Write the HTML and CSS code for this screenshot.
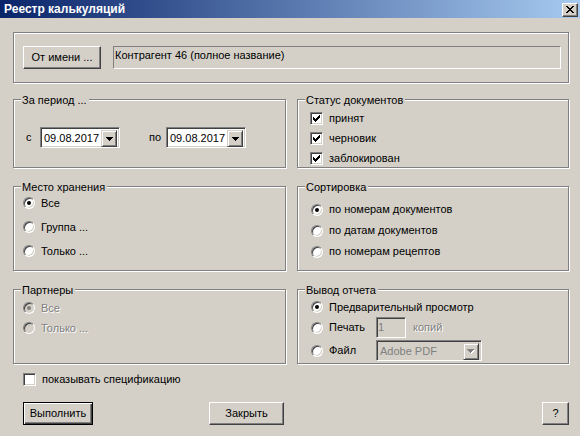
FILE: index.html
```html
<!DOCTYPE html>
<html lang="ru">
<head>
    <meta charset="UTF-8">
    <meta name="viewport" content="width=device-width, initial-scale=1.0">
    <title>Реестр калькуляций</title>
    <link rel="stylesheet" href="styles.css">
</head>
<body>
    <div class="dlg">
        <div class="caption">
            <span class="caption-title">Реестр калькуляций</span>
            <span class="caption-btn">
                <svg width="8" height="7" viewBox="0 0 8 7" shape-rendering="crispEdges"><path d="M0 0h2v1H0zM6 0h2v1H6zM1 1h2v1H1zM5 1h2v1H5zM2 2h4v1H2zM3 3h2v1H3zM2 4h4v1H2zM1 5h2v1H1zM5 5h2v1H5zM0 6h2v1H0zM6 6h2v1H6z" fill="#000"/></svg>
            </span>
        </div>

        <div class="client">
            <div class="frame agent">
                <button class="btn btn-agent">От имени ...</button>
                <div class="static">Контрагент 46 (полное название)</div>
            </div>

            <div class="groups">
                <!-- период -->
                <div class="frame period">
                    <span class="frame-title">За период ...</span>
                    <div class="period-row">
                        <span class="period-lbl">с</span>
                        <div class="combo date">
                            <span class="combo-text">09.08.2017</span>
                            <span class="combo-btn"><svg width="7" height="4" viewBox="0 0 7 4" shape-rendering="crispEdges"><path d="M0 0h7v1H0zM1 1h5v1H1zM2 2h3v1H2zM3 3h1v1H3z" fill="#000"/></svg></span>
                        </div>
                        <span class="period-lbl to">по</span>
                        <div class="combo date">
                            <span class="combo-text">09.08.2017</span>
                            <span class="combo-btn"><svg width="7" height="4" viewBox="0 0 7 4" shape-rendering="crispEdges"><path d="M0 0h7v1H0zM1 1h5v1H1zM2 2h3v1H2zM3 3h1v1H3z" fill="#000"/></svg></span>
                        </div>
                    </div>
                </div>

                <!-- статус -->
                <div class="frame status">
                    <span class="frame-title">Статус документов</span>
                    <div class="opt"><span class="chk"><svg width="7" height="7" viewBox="0 0 7 7" shape-rendering="crispEdges"><path d="M6 0h1v3H6zM5 1h1v3H5zM4 2h1v3H4zM0 2h1v3H0zM1 3h1v3H1zM3 3h1v3H3zM2 4h1v3H2z" fill="#000"/></svg></span>принят</div>
                    <div class="opt"><span class="chk"><svg width="7" height="7" viewBox="0 0 7 7" shape-rendering="crispEdges"><path d="M6 0h1v3H6zM5 1h1v3H5zM4 2h1v3H4zM0 2h1v3H0zM1 3h1v3H1zM3 3h1v3H3zM2 4h1v3H2z" fill="#000"/></svg></span>черновик</div>
                    <div class="opt"><span class="chk"><svg width="7" height="7" viewBox="0 0 7 7" shape-rendering="crispEdges"><path d="M6 0h1v3H6zM5 1h1v3H5zM4 2h1v3H4zM0 2h1v3H0zM1 3h1v3H1zM3 3h1v3H3zM2 4h1v3H2z" fill="#000"/></svg></span>заблокирован</div>
                </div>

                <!-- место хранения -->
                <div class="frame storage">
                    <span class="frame-title">Место хранения</span>
                    <div class="opt"><span class="radio on"></span>Все</div>
                    <div class="opt"><span class="radio"></span>Группа ...</div>
                    <div class="opt"><span class="radio"></span>Только ...</div>
                </div>

                <!-- сортировка -->
                <div class="frame sorting">
                    <span class="frame-title">Сортировка</span>
                    <div class="opt"><span class="radio on"></span>по номерам документов</div>
                    <div class="opt"><span class="radio"></span>по датам документов</div>
                    <div class="opt"><span class="radio"></span>по номерам рецептов</div>
                </div>

                <!-- партнеры (недоступно) -->
                <div class="frame partners">
                    <span class="frame-title">Партнеры</span>
                    <div class="opt disabled"><span class="radio on"></span>Все</div>
                    <div class="opt disabled"><span class="radio"></span>Только ...</div>
                </div>

                <!-- вывод отчета -->
                <div class="frame output">
                    <span class="frame-title">Вывод отчета</span>
                    <div class="opt"><span class="radio on"></span>Предварительный просмотр</div>
                    <div class="opt out-print">
                        <span class="radio"></span><span class="out-lbl">Печать</span>
                        <div class="edit">1</div>
                        <span class="copies">копий</span>
                    </div>
                    <div class="opt out-file">
                        <span class="radio"></span><span class="out-lbl">Файл</span>
                        <div class="combo pdf">
                            <span class="combo-text">Adobe PDF</span>
                            <span class="combo-btn"><svg width="8" height="5" viewBox="0 0 8 5" shape-rendering="crispEdges"><path d="M1 1h7v1H1zM2 2h5v1H2zM3 3h3v1H3zM4 4h1v1H4z" fill="#fff"/><path d="M0 0h7v1H0zM1 1h5v1H1zM2 2h3v1H2zM3 3h1v1H3z" fill="#808080"/></svg></span>
                        </div>
                    </div>
                </div>
            </div>

            <div class="opt spec"><span class="chk"></span>показывать спецификацию</div>

            <div class="actions">
                <button class="btn btn-run">Выполнить</button>
                <button class="btn btn-close">Закрыть</button>
                <button class="btn btn-help">?</button>
            </div>
        </div>
    </div>
</body>
</html>
```

FILE: styles.css
```css
*{
    box-sizing: border-box;
}
body{
    margin: 0;
}
.dlg{
    width: 580px;
    height: 436px;
    background: #D4D0C8;
    font-family: "Liberation Sans", Arial, sans-serif;
    font-size: 11px;
    line-height: 13px;
    color: #000;
    overflow: hidden;
}

/* заголовок окна */
.caption{
    height: 18px;
    display: flex;
    align-items: center;
    padding: 0 2px 0 4px;
    background: linear-gradient(to right, #0A246A, #A6CAF0);
}
.caption-title{
    color: #fff;
    font-weight: bold;
    font-size: 12px;
}
.caption-btn{
    margin-left: auto;
    margin-top: 1px;
    width: 16px;
    height: 14px;
    display: flex;
    align-items: center;
    justify-content: center;
    background: #D4D0C8;
    border: 1px solid;
    border-color: #fff #404040 #404040 #fff;
    box-shadow: inset -1px -1px #808080;
}

.client{
    padding: 14px 11px 0 13px;
}

/* рамки групп */
.frame{
    position: relative;
    border: 1px solid #808080;
    box-shadow: 1px 1px 0 #fff, inset 1px 1px 0 #fff;
}
.frame-title{
    position: absolute;
    top: -6px;
    left: 7px;
    padding: 0 2px 0 1px;
    background: #D4D0C8;
    white-space: nowrap;
}

/* кнопки */
.btn{
    font: inherit;
    color: #000;
    height: 23px;
    padding: 0;
    background: #D4D0C8;
    border: 1px solid;
    border-color: #fff #404040 #404040 #fff;
    box-shadow: inset -1px -1px #808080;
}
.btn-agent{
    width: 78px;
}
.btn-run{
    width: 70px;
    border: 1px solid #000;
    box-shadow: inset 1px 1px #fff, inset -1px -1px #404040, inset -2px -2px #808080;
}
.btn-close{
    width: 75px;
    margin-left: 116px;
}
.btn-help{
    width: 27px;
    margin-left: auto;
}

.agent{
    height: 51px;
    display: flex;
    align-items: flex-start;
    padding: 13px 7px 0 9px;
}
.static{
    flex: 1;
    height: 23px;
    margin-left: 12px;
    padding: 2px 0 0 1px;
    border: 1px solid;
    border-color: #808080 #fff #fff #808080;
    white-space: nowrap;
}

.groups{
    display: grid;
    grid-template-columns: 273px 272px;
    grid-template-rows: 69px 85px 75px;
    column-gap: 11px;
    row-gap: 18px;
    margin-top: 16px;
}

/* флажки и переключатели */
.opt{
    display: flex;
    align-items: center;
    height: 20px;
    white-space: nowrap;
}
.chk{
    flex: none;
    width: 13px;
    height: 13px;
    margin-right: 6px;
    display: flex;
    align-items: center;
    justify-content: center;
    background: #fff;
    border: 1px solid;
    border-color: #808080 #fff #fff #808080;
    box-shadow: inset 1px 1px #404040, inset -1px -1px #D4D0C8;
}
.radio{
    flex: none;
    position: relative;
    width: 12px;
    height: 12px;
    margin-right: 6px;
    border-radius: 50%;
    background: #fff;
    border: 1px solid;
    border-color: #808080 #fff #fff #808080;
    box-shadow: inset 1px 1px #404040, inset -1px -1px #D4D0C8;
}
.radio.on::after{
    content: "";
    position: absolute;
    left: 3px;
    top: 3px;
    width: 4px;
    height: 4px;
    border-radius: 50%;
    background: #000;
}
.disabled{
    color: #808080;
    text-shadow: 1px 1px 0 #fff;
}
.disabled .radio{
    background: #D4D0C8;
}
.disabled .radio.on::after{
    background: #808080;
}

/* поля ввода */
.combo{
    display: flex;
    height: 21px;
    padding: 2px;
    background: #fff;
    border: 1px solid;
    border-color: #808080 #fff #fff #808080;
    box-shadow: inset 1px 1px #404040, inset -1px -1px #D4D0C8;
}
.combo-text{
    flex: 1;
    padding-left: 1px;
    line-height: 17px;
}
.combo-btn{
    width: 16px;
    height: 17px;
    display: flex;
    align-items: center;
    justify-content: center;
    background: #D4D0C8;
    border: 1px solid;
    border-color: #D4D0C8 #404040 #404040 #D4D0C8;
    box-shadow: inset 1px 1px #fff, inset -1px -1px #808080;
}
.combo.date{
    width: 80px;
}
.combo.pdf{
    width: 106px;
    background: #D4D0C8;
    color: #808080;
}
.edit{
    width: 30px;
    height: 21px;
    padding: 2px 0 0 1px;
    line-height: 15px;
    color: #808080;
    border: 1px solid;
    border-color: #808080 #fff #fff #808080;
    box-shadow: inset 1px 1px #404040, inset -1px -1px #D4D0C8;
}

.period{
    padding: 27px 0 0 12px;
}
.period-row{
    display: flex;
    align-items: center;
}
.period-lbl{
    width: 14px;
}
.period-lbl.to{
    width: 17px;
    margin-left: 29px;
}

.status{
    padding: 8px 0 0 12px;
}
.storage{
    padding: 4px 0 0 9px;
}
.storage .opt{
    height: 24px;
}
.sorting{
    padding: 12px 0 0 13px;
}
.sorting .opt{
    height: 21px;
}
.partners{
    padding: 8px 0 0 9px;
}
.output{
    padding: 7px 0 0 13px;
}
.out-print{
    height: 21px;
}
.out-file{
    height: 21px;
    margin-top: 2px;
}
.out-lbl{
    width: 47px;
}
.copies{
    margin-left: 7px;
    color: #808080;
    text-shadow: 1px 1px 0 #fff;
}

.spec{
    height: 19px;
    margin-top: 6px;
    padding-left: 10px;
}
.actions{
    display: flex;
    margin-top: 13px;
    padding-left: 10px;
}
```
